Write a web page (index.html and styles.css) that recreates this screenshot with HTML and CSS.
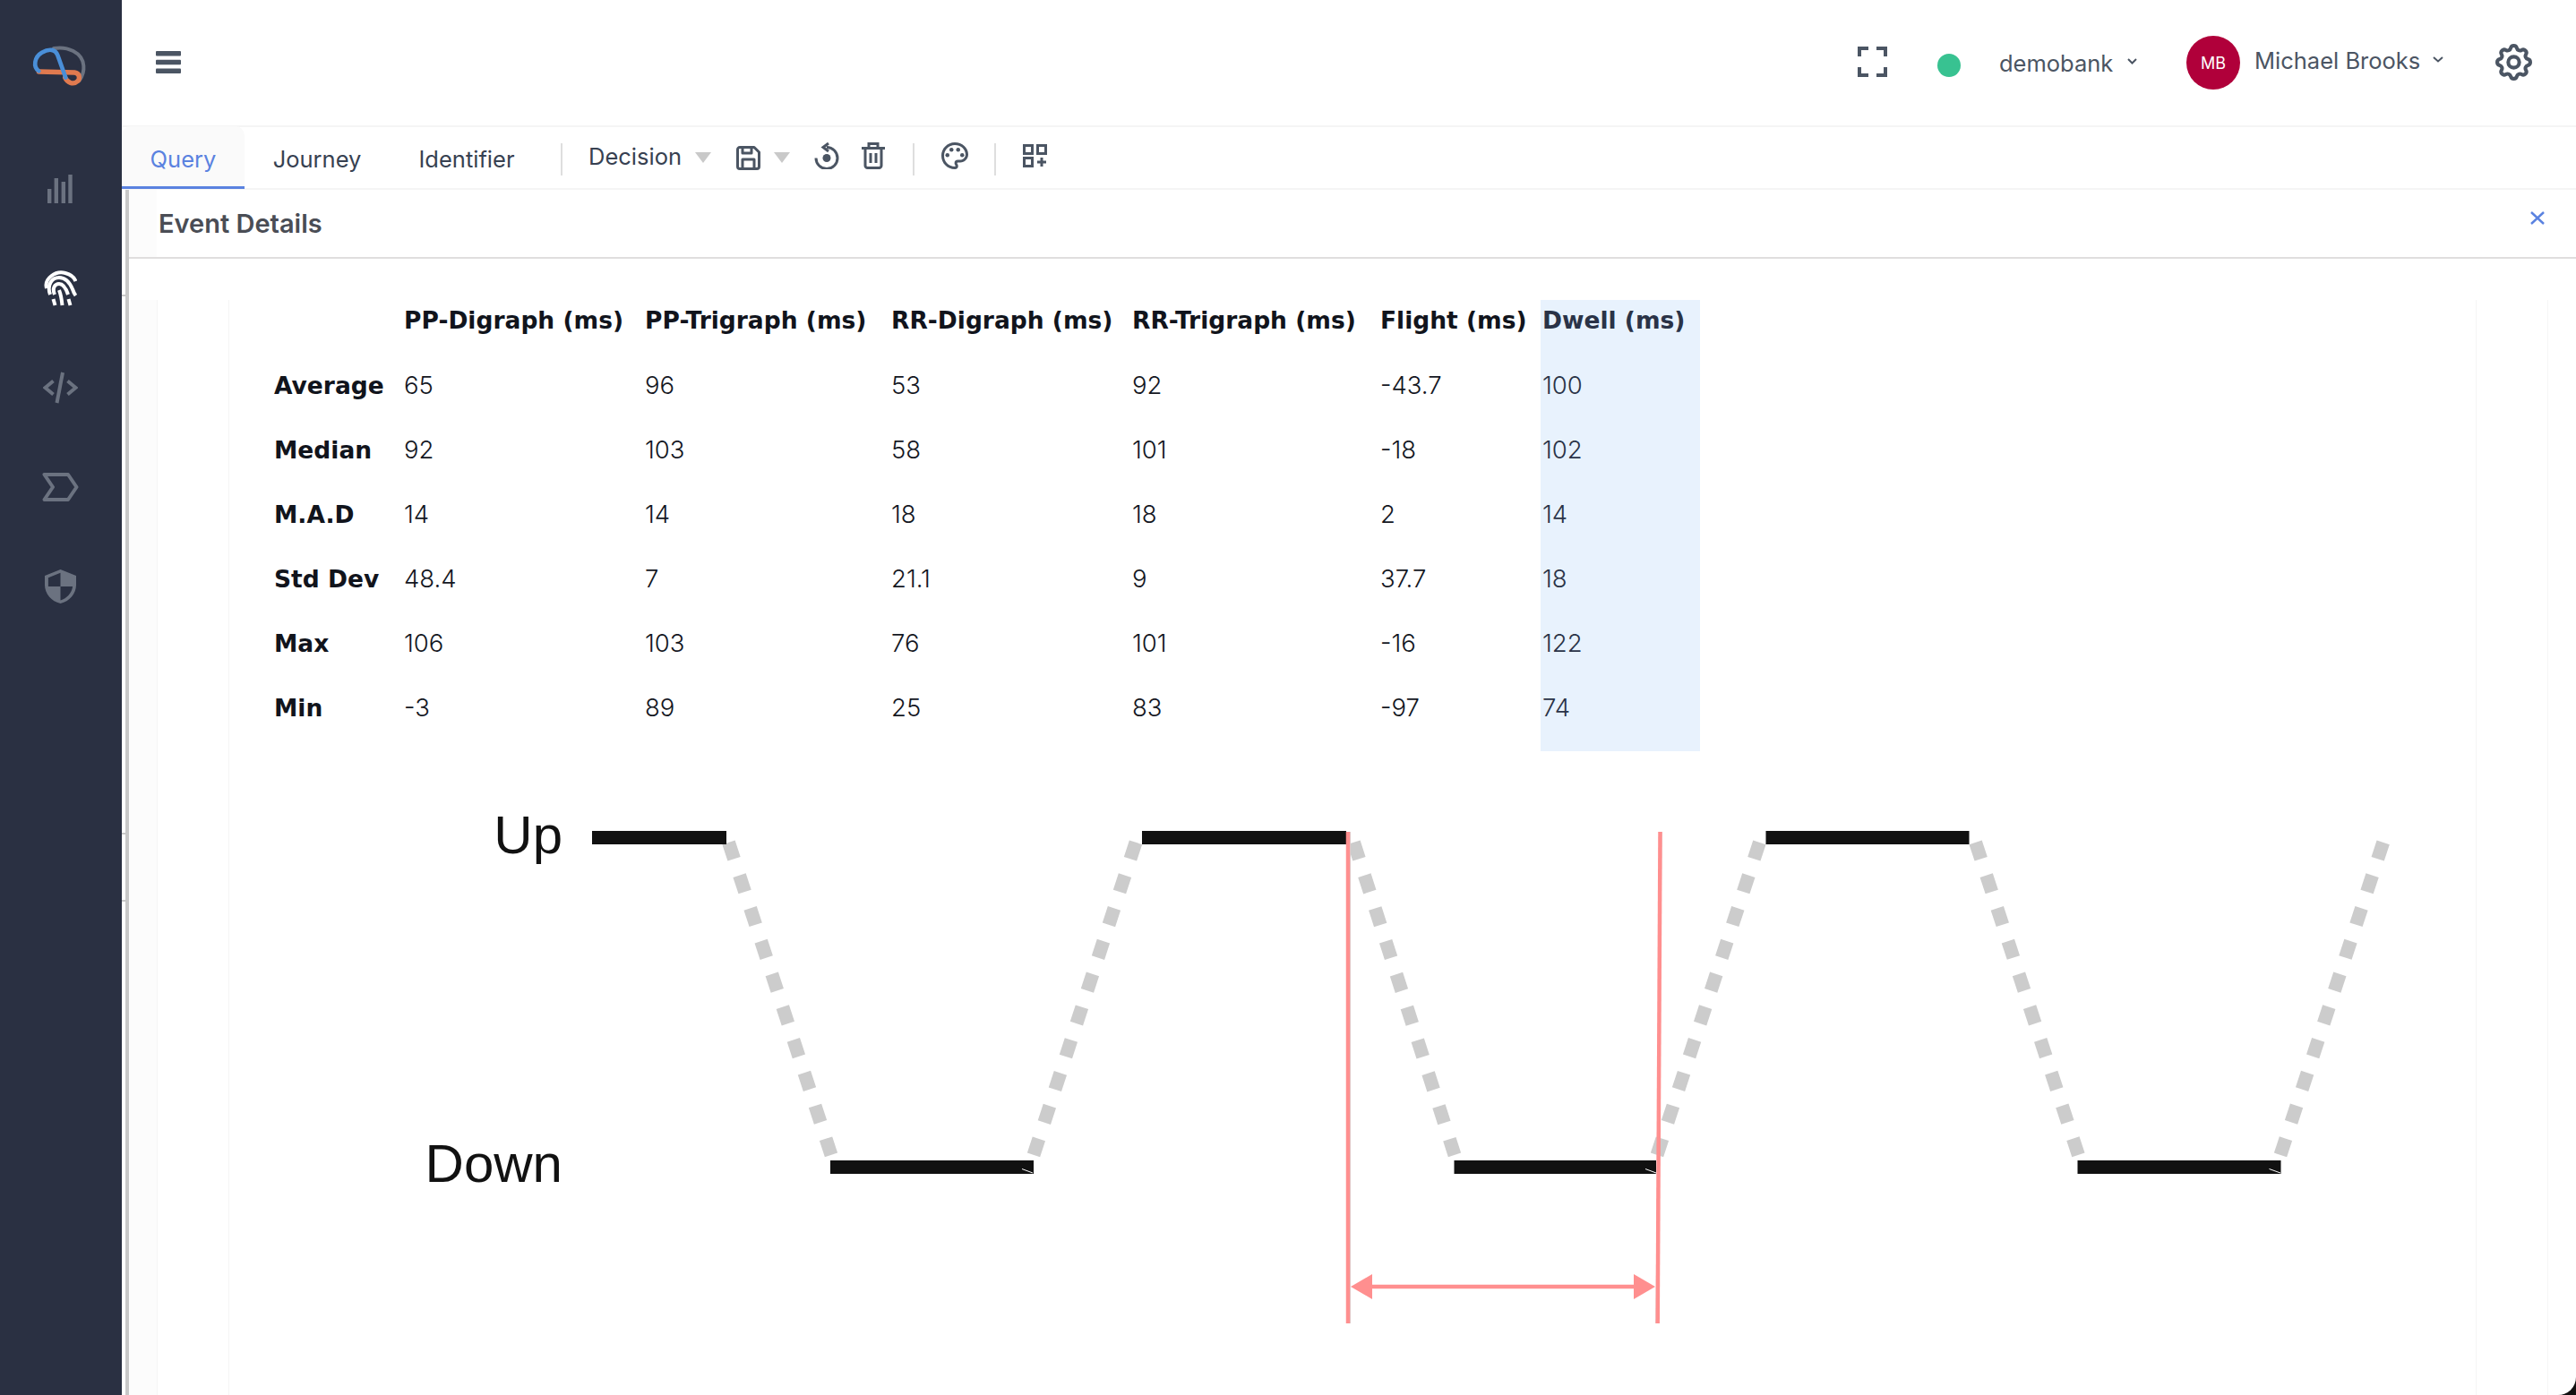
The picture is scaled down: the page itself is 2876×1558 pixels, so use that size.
FILE: index.html
```html
<!DOCTYPE html>
<html lang="en">
<head>
<meta charset="utf-8">
<title>Event Details</title>
<link rel="stylesheet" href="styles.css">
</head>
<body>
<div class="app">
  <aside class="sidebar">
    <div class="logo">
      <svg class="logo-svg" viewBox="0 0 240 195" width="80" height="65" fill="none" stroke-linecap="round">
        <path d="M90 42C135 34 186 55 190 100C192 120 186 135 176 150" stroke="#6b7280" stroke-width="12"/>
        <path d="M40 120L160 123C178 125 178 145 170 152C155 166 135 156 128 140" stroke="#e07a4f" stroke-width="16"/>
        <path d="M40 118C20 105 25 70 50 56C75 42 95 45 103 65L130 140" stroke="#4a8fd8" stroke-width="14"/>
      </svg>
    </div>
    <nav class="nav">
      <a class="nav-item"><svg width="28" height="32" viewBox="0 0 28 32" fill="#6b7280"><rect x="0" y="16" width="4.4" height="16"/><rect x="7.6" y="4" width="4.4" height="28"/><rect x="15.6" y="8" width="4.4" height="24"/><rect x="23.3" y="0" width="4.4" height="32"/></svg></a>
      <a class="nav-item"><svg width="37" height="40" viewBox="0 0 37 40" fill="none" stroke="#fff" stroke-width="4"><path d="M3 20C0 9 13 0 24 3C30 4.500 34 8 35.500 12"/><path d="M7 27C3 16 9 8 17 8C25 8 29 14 32 21C33 24 34 26 35.500 28"/><path d="M12 27C9 20 12 15 17 15C22 15 25 21 27 27"/><path d="M10.500 32L12.500 39"/><path d="M17 22C19 27 20 34 20.500 39"/><path d="M27.500 32L29.500 39"/></svg></a>
      <a class="nav-item"><svg width="39" height="36" viewBox="0 0 39 36" fill="none" stroke="#6b7280" stroke-width="4"><path d="M11.500 10.500L2.500 18L11.500 25.500"/><path d="M22 1L15.500 35"/><path d="M27.500 10.500L36.500 18L27.500 25.500"/></svg></a>
      <a class="nav-item"><svg width="41" height="32" viewBox="0 0 41 32" fill="none" stroke="#6b7280" stroke-width="4" stroke-linejoin="round"><path d="M2.500 2H29L38.500 16L29 30H2.500L12 16Z"/></svg></a>
      <a class="nav-item"><svg width="35" height="38" viewBox="3 1 18 22" preserveAspectRatio="none" fill="#6b7280"><path d="M12 1L3 5v6c0 5.550 3.840 10.740 9 12 5.160-1.260 9-6.450 9-12V5l-9-4zm0 10.990h7c-.53 4.120-3.280 7.790-7 8.940V12H5V6.300l7-3.110v8.800z"/></svg></a>
    </nav>
  </aside>
  <main class="main">
    <header class="topbar">
      <button class="menu-btn" aria-label="Menu"><svg width="28" height="25" viewBox="0 0 28 25" fill="#4b5563"><rect width="28" height="5.500" y="0" rx="1"/><rect width="28" height="5.500" y="9.700" rx="1"/><rect width="28" height="5.500" y="19.500" rx="1"/></svg></button>
      <div class="topbar-right">
        <svg class="full-icon" width="33" height="34" viewBox="0 0 33 34" fill="none" stroke="#4b5563" stroke-width="4"><path d="M2 11V2H12"/><path d="M21 2H31V11"/><path d="M31 23V32H21"/><path d="M12 32H2V23"/></svg>
        <span class="status-dot"></span>
        <span class="org-name">demobank</span>
        <svg class="chev chev-org" width="11" height="7" viewBox="0 0 11 7" fill="none" stroke="#4b5563" stroke-width="2"><path d="M1 1L5.500 5.500L10 1"/></svg>
        <span class="avatar">MB</span>
        <span class="user-name">Michael Brooks</span>
        <svg class="chev chev-user" width="12" height="7" viewBox="0 0 12 7" fill="none" stroke="#4b5563" stroke-width="2"><path d="M1 1L6 5.500L11 1"/></svg>
        <svg class="gear" width="41" height="41" viewBox="2 2 20 20" fill="none" stroke="#4b5563" stroke-width="2"><path d="M10.325 4.317c.426-1.756 2.924-1.756 3.350 0a1.724 1.724 0 002.573 1.066c1.543-.94 3.310.826 2.370 2.370a1.724 1.724 0 001.065 2.572c1.756.426 1.756 2.924 0 3.350a1.724 1.724 0 00-1.066 2.573c.94 1.543-.826 3.310-2.370 2.370a1.724 1.724 0 00-2.572 1.065c-.426 1.756-2.924 1.756-3.350 0a1.724 1.724 0 00-2.573-1.066c-1.543.94-3.310-.826-2.370-2.370a1.724 1.724 0 00-1.065-2.572c-1.756-.426-1.756-2.924 0-3.350a1.724 1.724 0 001.066-2.573c-.94-1.543.826-3.310 2.370-2.370.996.608 2.296.07 2.572-1.065z"/><circle cx="12" cy="12" r="3"/></svg>
      </div>
    </header>
    <div class="tabsbar">
      <a class="tab tab-active">Query</a>
      <a class="tab tab-journey">Journey</a>
      <a class="tab tab-identifier">Identifier</a>
      <span class="sep sep-first"></span>
      <span class="decision">Decision</span>
      <span class="tri tri-a"></span>
      <svg class="tool tool-save" width="27" height="27" viewBox="0 0 27 27" fill="none" stroke="#4b5563" stroke-width="3" stroke-linejoin="round"><path d="M4 1.500H20L25.500 7V23A2.500 2.500 0 0 1 23 25.500H4A2.500 2.500 0 0 1 1.500 23V4A2.500 2.500 0 0 1 4 1.500Z"/><path d="M7 25V15H20V25"/><path d="M7 2V8H17V2"/></svg>
      <span class="tri tri-b"></span>
      <svg class="tool tool-reset" width="28" height="30" viewBox="0 0 28 30" fill="none" stroke="#4b5563" stroke-width="3"><path d="M14 5.500A12 12 0 1 1 2 17.500"/><path d="M16 1L10 5.500L16 10"/><circle cx="14" cy="17.500" r="4.500" fill="#4b5563" stroke="none"/></svg>
      <svg class="tool tool-trash" width="26" height="30" viewBox="0 0 26 30" fill="none" stroke="#4b5563" stroke-width="3"><path d="M0 6.500H26"/><path d="M8 6V1.500H18V6"/><path d="M4 7V26A2.500 2.500 0 0 0 6.500 28.500H19.500A2.500 2.500 0 0 0 22 26V7"/><path d="M10 12V23"/><path d="M16 12V23"/></svg>
      <span class="sep sep-b"></span>
      <svg class="tool tool-palette" width="30" height="30" viewBox="2 2 20 20" fill="#4b5563"><path d="M12 22C6.490 22 2 17.510 2 12S6.490 2 12 2s10 4.040 10 9c0 3.310-2.690 6-6 6h-1.770c-.28 0-.5.22-.5.5 0 .12.05.23.13.33.41.47.64 1.060.64 1.670A2.500 2.500 0 0 1 12 22zm0-18c-4.410 0-8 3.590-8 8s3.590 8 8 8c.28 0 .5-.22.5-.5a.54.54 0 0 0-.14-.35c-.41-.46-.63-1.050-.63-1.650a2.500 2.500 0 0 1 2.500-2.500H16c2.210 0 4-1.790 4-4 0-3.860-3.590-7-8-7z"/><circle cx="6.500" cy="11.500" r="1.500"/><circle cx="9.500" cy="7.500" r="1.500"/><circle cx="14.500" cy="7.500" r="1.500"/><circle cx="17.500" cy="11.500" r="1.500"/></svg>
      <span class="sep sep-c"></span>
      <svg class="tool tool-grid" width="27" height="26" viewBox="0 0 27 26" fill="none" stroke="#4b5563" stroke-width="3"><rect x="1.500" y="1.500" width="9" height="9"/><rect x="16.500" y="1.500" width="9" height="9"/><rect x="1.500" y="15.500" width="9" height="9"/><path d="M21 15V25"/><path d="M16 20H26"/></svg>
    </div>
    <div class="panel">
      <div class="event-head">
        <h1 class="event-title">Event Details</h1>
        <svg class="close" width="16" height="15" viewBox="0 0 16 15" fill="none" stroke="#5a82e0" stroke-width="2.400"><path d="M1 1L15 14"/><path d="M15 1L1 14"/></svg>
      </div>
      <section class="event-body">
        <div class="frame-outer">
          <div class="frame-inner">
            <table class="stats">
              <colgroup>
                <col class="c-label"><col class="c-a"><col class="c-b"><col class="c-c"><col class="c-d"><col class="c-e"><col class="c-f">
              </colgroup>
              <thead>
                <tr class="head-row"><th></th><th>PP-Digraph (ms)</th><th>PP-Trigraph (ms)</th><th>RR-Digraph (ms)</th><th>RR-Trigraph (ms)</th><th>Flight (ms)</th><th class="dwell">Dwell (ms)</th></tr>
              </thead>
              <tbody>
                <tr><th>Average</th><td>65</td><td>96</td><td>53</td><td>92</td><td>-43.7</td><td class="dwell">100</td></tr>
                <tr><th>Median</th><td>92</td><td>103</td><td>58</td><td>101</td><td>-18</td><td class="dwell">102</td></tr>
                <tr><th>M.A.D</th><td>14</td><td>14</td><td>18</td><td>18</td><td>2</td><td class="dwell">14</td></tr>
                <tr><th>Std Dev</th><td>48.4</td><td>7</td><td>21.1</td><td>9</td><td>37.7</td><td class="dwell">18</td></tr>
                <tr><th>Max</th><td>106</td><td>103</td><td>76</td><td>101</td><td>-16</td><td class="dwell">122</td></tr>
                <tr class="last-row"><th>Min</th><td>-3</td><td>89</td><td>25</td><td>83</td><td>-97</td><td class="dwell">74</td></tr>
              </tbody>
            </table>
            <svg class="diagram" width="2510" height="678" viewBox="255 880 2510 678">
              <text class="dia-label" x="628" y="953" text-anchor="end">Up</text>
              <text class="dia-label" x="628" y="1320" text-anchor="end">Down</text>
              <g class="dashes">
                <path d="M813.500 940.800L928 1289.900"/>
                <path d="M1268 940.800L1154 1289.900"/>
                <path d="M1511.500 940.800L1624 1289.900"/>
                <path d="M1964.400 940.800L1850 1289.900"/>
                <path d="M2205.600 940.800L2320.400 1289.900"/>
                <path d="M2660.700 940.800L2546 1289.900"/>
              </g>
              <g class="bars">
                <rect x="661" y="928" width="150" height="15"/>
                <rect x="1275" y="928" width="228" height="15"/>
                <rect x="1971.500" y="928" width="227" height="15"/>
                <rect x="927" y="1296" width="227" height="15"/>
                <rect x="1623.500" y="1296" width="225.500" height="15"/>
                <rect x="2319.500" y="1296" width="227" height="15"/>
              </g>
              <g class="scratches">
                <path d="M1141 1305.500L1153 1310"/>
                <path d="M1837 1305.500L1849 1310"/>
                <path d="M2533.500 1305.500L2546 1310"/>
              </g>
              <g class="edge">
                <path d="M1507.300 929V1478"/>
                <path d="M1855 929L1849 1478"/>
              </g>
              <g class="red">
                <path d="M1505 929V1478"/>
                <path d="M1853.500 929L1850.700 1478"/>
                <path d="M1530 1437H1826"/>
              </g>
              <polygon class="red-fill" points="1508,1437 1532,1423 1532,1451"/>
              <polygon class="red-fill" points="1848,1437 1824,1423 1824,1451"/>
            </svg>
          </div>
        </div>
      </section>
    </div>
  </main>
  <span class="tick tick-a"></span>
  <span class="tick tick-b"></span>
  <span class="tick tick-c"></span>
</div>
</body>
</html>
```

FILE: styles.css
```css
* { box-sizing: border-box; }
html, body { margin: 0; height: 100%; background: #111; overflow: hidden; }
body { font-family: "Inter", "Liberation Sans", sans-serif; color: #374151; }
.app {
  position: relative;
  display: flex;
  width: 2876px;
  height: 1558px;
  background: #fff;
  border-bottom-right-radius: 20px;
  overflow: hidden;
}
.sidebar { flex: 0 0 136px; background: #2a3042; display: flex; flex-direction: column; }
.logo { height: 155px; padding: 40px 0 0 30px; }
.logo-svg { display: block; }
.nav { display: flex; flex-direction: column; }
.nav-item { height: 111px; display: flex; align-items: center; justify-content: center; }
.nav-item svg { display: block; margin-right: 2px; }
.main { flex: 1; min-width: 0; display: flex; flex-direction: column; }

.topbar {
  height: 142px;
  flex: none;
  display: flex;
  align-items: center;
  border-bottom: 2px solid #f5f5f5;
  padding: 0 49px 0 38px;
}
.menu-btn { border: 0; background: none; padding: 0; margin: -2px 0 0; display: flex; }
.topbar-right { margin-left: auto; display: flex; align-items: center; }
.full-icon { margin-right: 56px; margin-top: -2px; }
.status-dot { width: 26px; height: 26px; border-radius: 50%; background: #38c291; margin-top: 5px; }
.org-name { margin-left: 43px; font-size: 25.500px; color: #4b5563; margin-top: 2px; line-height: 32px; width: 126px; white-space: nowrap; }
.chev-org { margin-left: 17px; margin-top: -3px; }
.avatar {
  margin-left: 55px;
  width: 60px; height: 60px;
  border-radius: 50%;
  background: #b0003a;
  color: #fff;
  font-size: 18px;
  display: flex; align-items: center; justify-content: center;
}
.user-name { margin-left: 16px; font-size: 25.500px; color: #4b5563; line-height: 32px; margin-top: -4px; width: 183px; white-space: nowrap; }
.chev-user { margin-left: 16px; margin-top: -8px; }
.gear { margin-left: 58px; margin-top: -2px; }

.tabsbar {
  height: 70px;
  flex: none;
  display: flex;
  align-items: center;
  border-bottom: 2px solid #f5f5f5;
}
.tab {
  height: 70px;
  flex: none;
  width: 137px;
  text-align: center;
  font-size: 25.500px;
  line-height: 74px;
  color: #374151;
}
.tab-journey { width: 162px; }
.tab-identifier { width: 172px; }
.tab-active {
  color: #5a82e0;
  background: #fafafa;
  border-bottom: 3px solid #5a82e0;
  border-radius: 10px 10px 0 0;
}
.sep { width: 2px; height: 36px; background: #dedede; margin-top: 4px; }
.sep-first { margin-left: 19px; }
.decision { margin-left: 29px; font-size: 25.500px; color: #374151; margin-top: -3px; width: 103px; white-space: nowrap; }
.tri { width: 0; height: 0; border-left: 9px solid transparent; border-right: 9px solid transparent; border-top: 12px solid #c9c9c9; }
.tri-a { margin-left: 16px; }
.tool { display: block; }
.tool-save { margin-left: 28px; }
.tri-b { margin-left: 15px; }
.tool-reset { margin-left: 27px; margin-top: -4px; }
.tool-trash { margin-left: 25px; margin-top: -4px; }
.sep-b { margin-left: 31px; }
.tool-palette { margin-left: 30px; margin-top: -5px; }
.sep-c { margin-left: 29px; }
.tool-grid { margin-left: 30px; margin-top: -4px; }

.panel {
  flex: 1;
  min-height: 0;
  display: flex;
  flex-direction: column;
  margin-left: 4px;
  border-left: 4px solid #c8c8c8;
}
.event-head {
  height: 77px;
  flex: none;
  display: flex;
  align-items: center;
  justify-content: space-between;
  border-bottom: 2px solid #e0dede;
  padding: 0 35px 0 33px;
  background: linear-gradient(#fcfcfc, #fcfcfc) left / 31px 100% no-repeat;
}
.event-title { margin: 0; font-size: 29px; font-weight: 600; color: #4a4d55; }
.close { margin-top: -12px; }

.event-body { flex: 1; min-height: 0; }
.frame-outer {
  height: 100%;
  width: 2701px;
  background: linear-gradient(#fcfcfc, #fcfcfc) left / 31px 100% no-repeat;
  padding: 0 31px;
}
.frame-inner {
  position: relative;
  height: 100%;
  width: 2670px;
  padding: 0 79px;
  background: #fff;
  border-left: 1px solid #f5f5f5;
  border-right: 1px solid #f5f5f5;
}
.frame-inner::before, .frame-inner::after {
  content: "";
  position: absolute;
  top: 0; bottom: 0;
  width: 1px;
  background: #f5f5f5;
}
.frame-inner::before { left: 79px; }
.frame-inner::after { right: 79px; }

.stats {
  table-layout: fixed;
  width: 1592px;
  border-collapse: collapse;
  margin: 46px 0 0 51px;
  font-size: 27.500px;
  color: #14171f;
}
.c-label { width: 145px; }
.c-a { width: 269px; }
.c-b { width: 275px; }
.c-c { width: 269px; }
.c-d { width: 277px; }
.c-e { width: 179px; }
.c-f { width: 178px; }
.stats th, .stats td { padding: 0 0 2px; height: 72px; text-align: left; white-space: nowrap; vertical-align: middle; }
.stats th { font-family: "DejaVu Sans", "Inter", sans-serif; font-size: 26.500px; font-weight: 700; color: #11141c; }
.stats td { font-weight: 300; }
.stats .head-row th { height: 60px; padding-bottom: 16px; }
.stats .last-row th, .stats .last-row td { height: 84px; padding-bottom: 14px; }
.stats .dwell { background: #e8f2fd; padding-left: 2px; color: #2a3347; }

.diagram { display: block; margin: 41px 0 0; overflow: visible; }
.dia-label { font-family: "Liberation Sans", Arial, sans-serif; font-size: 60px; fill: #111; }
.dashes path { fill: none; stroke: #cccccc; stroke-width: 15; stroke-dasharray: 19.400 19.300; }
.bars rect { fill: #111; }
.scratches path { fill: none; stroke: #fff; stroke-width: 1; }
.edge path { fill: none; stroke: #d8d8d8; stroke-width: 1.500; }
.red path { fill: none; stroke: #ff8f8f; stroke-width: 4.500; }
.red-fill { fill: #ff8f8f; }

.tick { position: absolute; left: 136px; width: 4px; height: 2px; background: #c8c8c8; }
.tick-a { top: 329px; }
.tick-b { top: 930px; }
.tick-c { top: 1005px; }
```
